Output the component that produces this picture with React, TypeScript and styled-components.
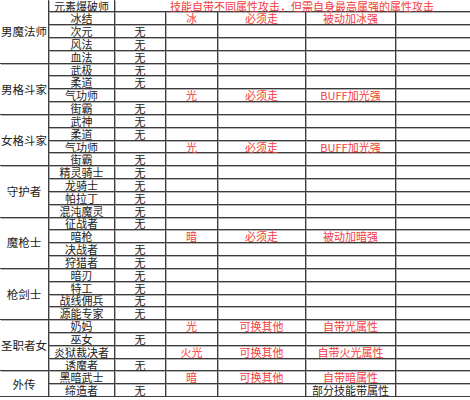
import React from 'react';
import styled, { createGlobalStyle } from 'styled-components';

const GlobalStyle = createGlobalStyle`
  html, body {
    margin: 0;
    padding: 0;
    background: #fff;
  }
  body {
    font-family: "Noto Sans CJK SC", "Liberation Sans", sans-serif;
  }
`;

const Sheet = styled.div`
  display: grid;
  grid-template-columns: 49px 66px 51px 52px 88px 90px 1fr;
  grid-template-rows: 12.3px;
  grid-auto-rows: 12.83px;
  width: 470px;
  font-size: 11px;
  color: #222;
`;

const Cell = styled.div<{ $red?: boolean; $last?: boolean }>`
  display: flex;
  align-items: center;
  justify-content: center;
  box-sizing: border-box;
  padding-top: 1px;
  white-space: nowrap;
  line-height: 1;
  border-bottom: 1px solid #3c3c3c;
  border-right: ${p => (p.$last ? 'none' : '1px solid #3c3c3c')};
  box-shadow: 1px 1px 0 #b4b4b4;
  color: ${p => (p.$red ? '#f33c3c' : '#222')};
`;

const GroupCell = styled(Cell)<{ $span: number }>`
  grid-column: 1;
  grid-row: span ${p => p.$span};
  font-size: 11.5px;
`;

const HeaderNote = styled(Cell)`
  grid-column: 3 / -1;
  justify-content: flex-start;
  padding-left: 55px;
  border-right: none;
  color: #f33c3c;
`;

type Row = [string, string?, string?, string?, string?, string?];

interface Group {
  name: string;
  rows: Row[];
}

const groups: Group[] = [
  {
    name: '男魔法师',
    rows: [['冰结', '', '冰', '必须走', '被动加冰强'], ['次元', '无'], ['风法', '无'], ['血法', '无']],
  },
  {
    name: '男格斗家',
    rows: [['武极', '无'], ['柔道', '无'], ['气功师', '', '光', '必须走', 'BUFF加光强'], ['街霸', '无']],
  },
  {
    name: '女格斗家',
    rows: [['武神', '无'], ['柔道', '无'], ['气功师', '', '光', '必须走', 'BUFF加光强'], ['街霸', '无']],
  },
  {
    name: '守护者',
    rows: [['精灵骑士', '无'], ['龙骑士', '无'], ['帕拉丁', '无'], ['混沌魔灵', '无']],
  },
  {
    name: '魔枪士',
    rows: [['征战者', '无'], ['暗枪', '', '暗', '必须走', '被动加暗强'], ['决战者', '无'], ['狩猎者', '无']],
  },
  {
    name: '枪剑士',
    rows: [['暗刃', '无'], ['特工', '无'], ['战线佣兵', '无'], ['源能专家', '无']],
  },
  {
    name: '圣职者女',
    rows: [
      ['奶妈', '', '光', '可换其他', '自带光属性'],
      ['巫女', '无'],
      ['炎狱裁决者', '', '火光', '可换其他', '自带火光属性'],
      ['诱魔者', '无'],
    ],
  },
  {
    name: '外传',
    rows: [['黑暗武士', '', '暗', '可换其他', '自带暗属性'], ['缔造者', '无', '', '', '部分技能带属性']],
  },
];

const App: React.FC = () => {
  return (
    <>
      <GlobalStyle />
      <Sheet>
        {groups.map((group, gi) => (
          <React.Fragment key={group.name + gi}>
            <GroupCell $span={group.rows.length + (gi === 0 ? 1 : 0)}>{group.name}</GroupCell>
            {gi === 0 && (
              <>
                <Cell>元素爆破师</Cell>
                <HeaderNote>技能自带不同属性攻击，但需自身最高属强的属性攻击</HeaderNote>
              </>
            )}
            {group.rows.map((row, ri) => {
              const [sub, none = '', elem = '', need = '', passive = ''] = row;
              // the last row's note is plain black text
              const black = passive === '部分技能带属性';
              return (
                <React.Fragment key={sub + ri}>
                  <Cell>{sub}</Cell>
                  <Cell>{none}</Cell>
                  <Cell $red>{elem}</Cell>
                  <Cell $red>{need}</Cell>
                  <Cell $red={!black}>{passive}</Cell>
                  <Cell $last />
                </React.Fragment>
              );
            })}
          </React.Fragment>
        ))}
      </Sheet>
    </>
  );
};

export default App;
